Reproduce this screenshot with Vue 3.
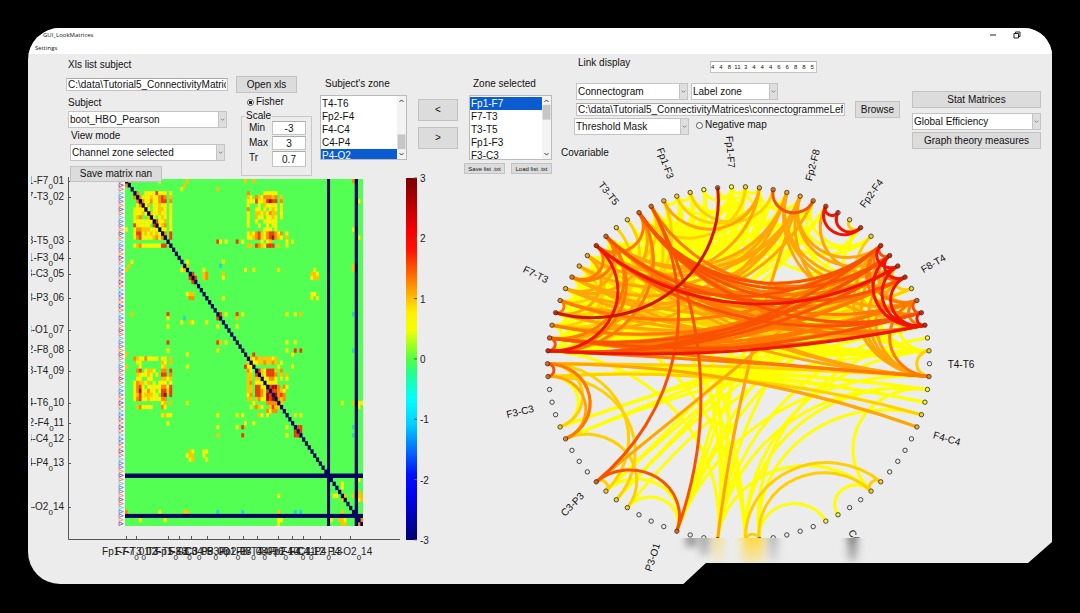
<script setup>
import { ref } from 'vue'

const xlsPath = ref('C:\\data\\Tutorial5_ConnectivityMatrices\\list.xlsx')
const linkPath = ref('C:\\data\\Tutorial5_ConnectivityMatrices\\connectogrammeLeft.txt')
const order = ref('4   4   8  11  3   4   4   4   6   6   8   8   5')
const scaleMin = ref('-3')
const scaleMax = ref('3')
const threshold = ref('0.7')
const subjectZones = ['T4-T6', 'Fp2-F4', 'F4-C4', 'C4-P4', 'P4-O2']
const selectedZones = ['Fp1-F7', 'F7-T3', 'T3-T5', 'Fp1-F3', 'F3-C3']
const subjectZone = ref('P4-O2')
const selectedZone = ref('Fp1-F7')

/* ---- matrix ---- */
const N = 86
const palette = { y: '#fff200', g: '#ffc400', o: '#ff8a00', r: '#f03c00', d: '#a80800', c: '#22d8c8' }
const grid = new Map()
function put(r, c, k) {
  if (!palette[k]) return
  grid.set(r * N + c, k)
  grid.set(c * N + r, k)
}
function block(r0, c0, rows) {
  rows.forEach((line, i) => [...line].forEach((k, j) => {
    if (r0 + i <= c0 + j) put(r0 + i, c0 + j, k)
  }))
}
block(3, 3, [
  '.o..yyyyryyy.y', '.royyygyyoro.g', '..doyyoyyorr.o', '...oyg.yygyy.y', '....oy.yyggy.y',
  '.....ogyygyy.y', '......oy.ygy.y', '.......oryyg.y', '........oygo.y', '.........oyy.y',
  '..........do.r', '...........d.r', '............o.', '.............o'
])
block(3, 44, [
  'o.....yyyyy..', 'gy.ogyooogo.g', 'yyyryygrdrr.o', 'y...y.gyyyy.y', 'o..yy.y.ygy.y',
  'y..ggygyogg.y', 'y..gyy.yygy.y', 'y..y..yyyyy..', 'y...y..y.yy..', '......yyy.y..',
  'ygyorgyorroyo', 'yygorgyordogy', '.....y.yg....', 'gg.rogyrrr.g.'
])
block(44, 44, [
  'ygyogggggyg..', '.gyyggoggog.y', '...........y.', '...drgyrrrg.o', '....rgyrrro.g',
  '.....yyyooy.y', '......yyyyy..', '.......rrddo.o', '........drrogy', '.........rdoro',
  '..........dogo', '............g', '............g'
])
const spots = [
  [2, 33, 'y'], [0, 43, 'g'], [0, 46, 'g'], [1, 21, 'g'], [2, 20, 'y'], [0, 22, 'g'], [0, 1, 'o'], [0, 12, 'y'],
  [0, 82, 'o'], [5, 84, 'y'], [12, 82, 'y'], [14, 84, 'y'], [21, 82, 'g'], [22, 82, 'g'], [15, 33, 'r'], [15, 34, 'y'],
  [15, 36, 'y'], [15, 40, 'r'], [15, 42, 'y'], [13, 58, 'y'], [14, 58, 'g'], [15, 58, 'y'], [16, 58, 'y'], [15, 60, 'y'],
  [20, 35, 'y'], [21, 34, 'c'], [22, 28, 'y'], [23, 28, 'g'], [24, 28, 'g'], [23, 29, 'o'], [24, 29, 'o'], [23, 35, 'g'],
  [24, 35, 'y'], [22, 43, 'y'], [22, 46, 'y'], [22, 55, 'y'], [22, 68, 'y'], [23, 67, 'g'], [23, 68, 'g'], [23, 69, 'y'],
  [24, 67, 'y'], [24, 68, 'g'], [24, 69, 'g'], [28, 67, 'y'], [28, 68, 'y'], [29, 67, 'y'], [29, 69, 'y'], [29, 35, 'y'],
  [33, 40, 'r'], [33, 42, 'y'], [34, 40, 'g'], [36, 40, 'y'], [33, 58, 'y'], [33, 61, 'y'], [33, 63, 'g'], [33, 82, 'c'],
  [33, 36, 'y'], [33, 34, 'r'], [40, 58, 'y'], [40, 61, 'y'], [42, 58, 'y'], [42, 61, 'r'], [42, 63, 'r'], [43, 60, 'y'],
  [42, 82, 'c'], [43, 46, 'r'], [46, 60, 'y'], [48, 58, 'g'], [49, 58, 'y'], [51, 58, 'y'], [55, 78, 'y'], [55, 82, 'g'],
  [55, 85, 'y'], [61, 82, 'c'], [63, 82, 'c'], [61, 62, 'r'], [61, 63, 'r'], [62, 63, 'r'], [58, 61, 'y'], [58, 63, 'y'],
  [24, 25, 'r'], [23, 24, 'r'], [20, 22, 'y'], [21, 22, 'g'], [2, 33, 'g'], [74, 84, 'y'], [76, 78, 'y'], [78, 79, 'g'],
  [75, 78, 'y'], [78, 82, 'g'], [78, 84, 'g'], [79, 85, 'g'], [79, 84, 'y'], [55, 84, 'y'], [56, 84, 'y'], [77, 84, 'g'],
  [82, 12, 'y'], [78, 85, 'g'], [84, 85, 'o']
]
spots.forEach(([r, c, k]) => put(r, c, k))
const cells = [...grid].map(([id, k]) => ({ id, x: id % N, y: Math.floor(id / N), fill: palette[k] }))

const triColors = ['#f08050', '#8a5aa8', '#4f74c8', '#60b8d8', '#e06a50', '#6a3f90']
const triangles = Array.from({ length: N }, (_, i) => ({
  d: `M119 ${179.5 + i * 4.03}v3.4l4.4-1.7z`, stroke: triColors[(i * 5) % 6]
}))

const zoneNames = ['Fp1-F7', 'F7-T3', 'T3-T5', 'Fp1-F3', 'F3-C3', 'C3-P3', 'P3-O1', 'Fp2-F8', 'F8-T4', 'T4-T6', 'Fp2-F4', 'F4-C4', 'C4-P4', 'P4-O2']
const tickY = [181, 197, 241, 258, 274, 298, 330, 350, 371, 403, 423, 439, 463, 507]
const tickX = [126, 136, 168, 179, 191, 207, 229, 243, 257, 278, 292, 303, 320, 350]
const axis = zoneNames.map((name, i) => ({ name, no: String(i + 1).padStart(2, '0'), x: tickX[i], y: tickY[i] }))
const barTicks = [3, 2, 1, 0, -1, -2, -3].map((v, i) => ({ v, y: 178 + i * 60.3 }))

/* ---- connectogram ---- */
const cx = 738.5
const cy = 363.7
const rx = 191
const ry = 177
const angle = i => (i * 2 * Math.PI) / N
const nodes = Array.from({ length: N }, (_, i) => ({ x: cx + rx * Math.cos(angle(i)), y: cy - ry * Math.sin(angle(i)) }))
// Links bend towards the centre and meet the outline at a right angle.
function arc(a, b) {
  const lo = Math.min(a, b)
  const hi = Math.max(a, b)
  const flip = hi - lo > N / 2
  const half = (Math.min(hi - lo, N - hi + lo) * Math.PI) / N
  const t = Math.min(Math.tan(half), 60)
  const p = nodes[lo]
  const q = nodes[hi]
  return `M${p.x.toFixed(1)} ${p.y.toFixed(1)}A${(rx * t).toFixed(1)} ${(ry * t).toFixed(1)} 0 0 ${flip ? 0 : 1} ${q.x.toFixed(1)} ${q.y.toFixed(1)}`
}
function pairs(a0, a1, b0, b1, keep) {
  const out = []
  for (let a = a0; a <= a1; a++) for (let b = b0; b <= b1; b++) if (a < b && keep(a, b)) out.push([a, b])
  return out
}
const layers = [
  { color: '#ffff00', width: 3, links: [
    ...pairs(1, 10, 29, 42, (a, b) => a !== 2 && (a * 5 + b * 3) % 4 !== 0 && b !== 30 && b !== 31),
    ...pairs(32, 42, 33, 42, (a, b) => b - a > 1 && (a + b) % 4 !== 0),
    ...pairs(24, 29, 32, 42, (a, b) => (a * 3 + b) % 2 === 0),
    ...pairs(15, 23, 32, 42, (a, b) => (a * 7 + b * 3) % 4 === 0),
    ...pairs(15, 22, 25, 31, (a, b) => (a * 7 + b * 3) % 7 === 0 && b < 30),
    [25, 26], [26, 27], [21, 22], [20, 21], [22, 24], [11, 16], [17, 8],
    [22, 26], [21, 25], [20, 26], [22, 28], [21, 23], [18, 21], [17, 20], [16, 22], [11, 17], [11, 20], [9, 22], [7, 18], [5, 16], [1, 5], [1, 8], [1, 10], [1, 12],
    [43, 83], [43, 84], [44, 84], [44, 82], [44, 83], [44, 85], [43, 82], [48, 3], [48, 5], [49, 1], [49, 4], [48, 44], [53, 9], [54, 8], [55, 7], [56, 5], [55, 10],
    [54, 60], [53, 60], [56, 60], [60, 7], [60, 10], [60, 17], [63, 30], [63, 27], [63, 22], [63, 3], [63, 10], [65, 33], [65, 29], [65, 1], [65, 84], [66, 2], [66, 82],
    [63, 42], [65, 38], [60, 85], [72, 75], [66, 71], [63, 75], [63, 84], [75, 84], [60, 20], [54, 12]
  ] },
  { color: '#ffd000', width: 3, links: [
    ...pairs(3, 10, 32, 42, (a, b) => (a * 3 + b * 5) % 7 === 0),
    ...pairs(27, 36, 34, 42, (a, b) => b - a > 3 && (a * 3 + b * 2) % 7 === 0),
    [19, 25], [20, 26], [21, 29], [18, 33], [12, 13], [43, 81], [43, 85], [44, 82], [44, 55], [49, 56], [43, 54], [53, 54], [65, 76], [66, 75], [75, 76], [65, 66], [43, 48], [6, 8], [3, 11], [85, 7], [85, 10], [1, 85]
  ] },
  { color: '#ffa50a', width: 3, links: [
    [17, 33], [17, 36], [17, 38], [18, 35], [18, 40], [18, 7], [18, 5], [17, 9], [17, 4], [17, 10], [15, 8], [16, 37], [20, 27], [20, 34], [29, 37], [29, 41],
    [33, 85], [32, 85], [36, 85], [38, 5], [37, 3], [5, 9], [63, 17], [53, 10], [43, 81], [43, 49], [44, 49], [34, 39], [32, 37], [10, 85], [9, 85], [8, 85], [7, 85],
    [36, 8], [39, 7], [40, 9], [18, 32], [17, 32], [18, 8]
  ] },
  { color: '#ff7800', width: 3, links: [
    [42, 85], [41, 85], [33, 3], [32, 3], [32, 4], [10, 41], [10, 38], [9, 40], [7, 42], [5, 42], [4, 41], [29, 8], [29, 5], [29, 3], [32, 36], [33, 36],
    [32, 41], [29, 42], [29, 33], [32, 42], [85, 5], [4, 10], [5, 10], [7, 10], [3, 5], [38, 39], [43, 49], [33, 7], [32, 9], [41, 8], [41, 5], [41, 7], [28, 9], [10, 32]
  ] },
  { color: '#f85200', width: 3, links: [
    [16, 19], [28, 53], [28, 60], [53, 60], [29, 9], [29, 10], [29, 7], [33, 10], [10, 42], [41, 9], [8, 42], [9, 42], [4, 42], [41, 3], [41, 42], [43, 44], [33, 4], [8, 32], [9, 10], [5, 4], [29, 4]
  ] },
  { color: '#ee1400', width: 3, links: [
    [33, 8], [33, 42], [42, 3], [9, 3], [8, 3], [7, 3], [9, 7], [10, 8], [3, 4], [14, 15], [12, 15], [12, 14]
  ] },
  { color: '#cc1400', width: 3, links: [[23, 39]] }
]
const zoneLabels = [
  { t: 'Fp1-F7', x: 731, y: 152, r: 86 }, { t: 'Fp1-F3', x: 666, y: 163, r: 70 }, { t: 'T3-T5', x: 609, y: 193, r: 52 },
  { t: 'F7-T3', x: 536, y: 274, r: 26 }, { t: 'F3-C3', x: 520, y: 411, r: -13 }, { t: 'C3-P3', x: 572, y: 504, r: -46 },
  { t: 'P3-O1', x: 652, y: 557, r: -72 }, { t: 'Fp2-F8', x: 812, y: 165, r: -75 }, { t: 'Fp2-F4', x: 871, y: 193, r: -54 },
  { t: 'F8-T4', x: 933, y: 263, r: -30 }, { t: 'T4-T6', x: 961, y: 364, r: 0 }, { t: 'F4-C4', x: 947, y: 438, r: 16 },
  { t: 'C4-P4', x: 859, y: 542, r: 56 }
]
</script>

<template>
  <div class="desk">
    <div class="window">
      <div class="face">
        <header>
          <div class="titlebar">
            <span class="title">GUI_LookMatrices</span>
            <div class="winbtns">
              <button aria-label="Minimize"><svg viewBox="0 0 8 8"><path d="M1 4h6" /></svg></button>
              <button aria-label="Restore"><svg viewBox="0 0 8 8"><path d="M1 2.5h4.500v4.500h-4.500zM2.500 2.500v-1.500h4.500v4.500h-1.500" /></svg></button>
            </div>
          </div>
          <nav><button class="menu">Settings</button></nav>
        </header>

        <main>
          <section class="panel">
            <div class="controls left">
              <div class="col files">
                <label for="xls" class="lab first">Xls list subject</label>
                <input id="xls" v-model="xlsPath" class="field path" type="text" />
                <label for="subject" class="lab subject">Subject</label>
                <span class="drop"><select id="subject"><option>boot_HBO_Pearson</option></select><svg viewBox="0 0 8 8"><path d="M2 3l2 2 2-2" /></svg></span>
                <label for="view" class="lab inset">View mode</label>
                <span class="drop view"><select id="view"><option>Channel zone selected</option></select><svg viewBox="0 0 8 8"><path d="M2 3l2 2 2-2" /></svg></span>
                <button class="btn save">Save matrix nan</button>
              </div>

              <div class="col scale">
                <button class="btn open">Open xls</button>
                <label class="radio fisher"><input type="radio" name="fisher" checked />Fisher</label>
                <fieldset>
                  <legend>Scale</legend>
                  <label for="min">Min</label><input id="min" v-model="scaleMin" class="field" type="text" />
                  <label for="max">Max</label><input id="max" v-model="scaleMax" class="field" type="text" />
                  <label for="tr">Tr</label><input id="tr" v-model="threshold" class="field tall" type="text" />
                </fieldset>
              </div>

              <div class="col zone">
                <span id="zone-a" class="lab">Subject's zone</span>
                <div class="listbox">
                  <ul role="listbox" aria-labelledby="zone-a">
                    <li v-for="z in subjectZones" :key="z" role="option" :aria-selected="z === subjectZone" @click="subjectZone = z">{{ z }}</li>
                  </ul>
                  <svg class="bar" viewBox="0 0 8 64"><rect y="39" width="8" height="15" /><path d="M2 6l2-2 2 2M2 58l2 2 2-2" /></svg>
                </div>
              </div>

              <div class="col move">
                <button class="btn">&lt;</button>
                <button class="btn">&gt;</button>
              </div>

              <div class="col zone picked">
                <span id="zone-b" class="lab">Zone selected</span>
                <div class="listbox">
                  <ul role="listbox" aria-labelledby="zone-b">
                    <li v-for="z in selectedZones" :key="z" role="option" :aria-selected="z === selectedZone" @click="selectedZone = z">{{ z }}</li>
                  </ul>
                  <svg class="bar" viewBox="0 0 8 64"><rect y="9" width="8" height="15" /><path d="M2 6l2-2 2 2M2 58l2 2 2-2" /></svg>
                </div>
                <div class="lists">
                  <button class="btn tiny">Save list .txt</button>
                  <button class="btn tiny">Load list .txt</button>
                </div>
              </div>
            </div>

            <svg class="plot matrix" viewBox="28 176 529 408" role="img" aria-label="Connectivity matrix">
              <defs>
                <linearGradient id="jet" x1="0" y1="0" x2="0" y2="1">
                  <stop offset="0" stop-color="#780000" /><stop offset=".14" stop-color="#f40000" /><stop offset=".2" stop-color="#ff1400" />
                  <stop offset=".37" stop-color="#fff000" /><stop offset=".42" stop-color="#f4ff00" /><stop offset=".5" stop-color="#54ff40" />
                  <stop offset=".54" stop-color="#20ff90" /><stop offset=".61" stop-color="#00ffff" /><stop offset=".68" stop-color="#00d0ff" />
                  <stop offset=".82" stop-color="#0010ff" /><stop offset=".88" stop-color="#0000f0" /><stop offset="1" stop-color="#000070" />
                </linearGradient>
                <clipPath id="edge"><rect x="31" y="170" width="530" height="420" /></clipPath>
              </defs>
              <g clip-path="url(#edge)">
                <path class="axis" d="M68.500 177V539.500H400" />
                <g v-for="a in axis" :key="a.no">
                  <path class="axis" :d="`M68 ${a.y + 0.5}h3M${a.x + 0.5} 539v-3`" />
                  <text :x="64" :y="a.y + 3" text-anchor="end">{{ a.name }}<tspan class="sub" dy="5">0</tspan><tspan dy="-5">{{ a.no }}</tspan></text>
                  <text :x="a.x" y="555" text-anchor="middle">{{ a.name }}<tspan class="sub" dy="5">0</tspan><tspan dy="-5">{{ a.no }}</tspan></text>
                </g>
              </g>
              <rect x="118" y="179" width="7" height="347" fill="#f6f6f8" />
              <path v-for="(t, i) in triangles" :key="i" class="tri" :d="t.d" :stroke="t.stroke" />
              <svg x="125" y="179" width="238" height="347" viewBox="0 0 86 86" preserveAspectRatio="none">
                <rect width="86" height="86" fill="#54ff54" />
                <rect v-for="c in cells" :key="c.id" :x="c.x" :y="c.y" width="1.05" height="1.05" :fill="c.fill" />
                <g fill="#04085c">
                  <rect v-for="i in N" :key="i" :x="i - 1" :y="i - 1" width="1.15" height="1.1" />
                  <rect x="73" width="1.1" height="86" /><rect x="83" width="1.2" height="86" />
                  <rect y="73" width="86" height="1.1" /><rect y="83" width="86" height="1" />
                </g>
              </svg>
              <rect x="406" y="178" width="11" height="362" fill="url(#jet)" />
              <g v-for="b in barTicks" :key="b.v">
                <path class="axis" :d="`M414 ${b.y}h3`" />
                <text x="420" :y="b.y + 4">{{ b.v }}</text>
              </g>
            </svg>
          </section>

          <section class="panel">
            <div class="controls right">
              <div class="col links">
                <div class="row head">
                  <label for="order" class="lab">Link display</label>
                  <input id="order" v-model="order" class="field order" type="text" />
                </div>
                <div class="row">
                  <span class="drop kind"><select aria-label="Link display"><option>Connectogram</option></select><svg viewBox="0 0 8 8"><path d="M2 3l2 2 2-2" /></svg></span>
                  <span class="drop label"><select aria-label="Label"><option>Label zone</option></select><svg viewBox="0 0 8 8"><path d="M2 3l2 2 2-2" /></svg></span>
                </div>
                <input v-model="linkPath" class="field path" type="text" aria-label="Link file" />
                <div class="row mask">
                  <span class="drop"><select aria-label="Mask"><option>Threshold Mask</option></select><svg viewBox="0 0 8 8"><path d="M2 3l2 2 2-2" /></svg></span>
                  <label class="radio"><input type="radio" name="negative" />Negative map</label>
                </div>
                <span class="lab cov">Covariable</span>
              </div>
              <button class="btn browse">Browse</button>
              <div class="col stats">
                <button class="btn">Stat Matrices</button>
                <span class="drop"><select aria-label="Graph measure"><option>Global Efficiency</option></select><svg viewBox="0 0 8 8"><path d="M2 3l2 2 2-2" /></svg></span>
                <button class="btn graph">Graph theory measures</button>
              </div>
            </div>

            <svg class="plot circle" viewBox="557 160 495 424" role="img" aria-label="Connectogram">
              <defs>
                <clipPath id="shown"><path d="M480 100H1060V538H686V600H480z" /></clipPath>
                <filter id="soft" x="-100%" y="-50%" width="300%" height="200%"><feGaussianBlur stdDeviation="4 3" /></filter>
                <linearGradient id="fade" x1="0" y1="0" x2="0" y2="1"><stop offset="0" stop-color="#fff" /><stop offset="1" stop-color="#fff" stop-opacity=".25" /></linearGradient>
                <mask id="fall"><rect x="660" y="538" width="400" height="26" fill="url(#fade)" /></mask>
              </defs>
              <g mask="url(#fall)">
                <g filter="url(#soft)">
                  <rect x="687" y="534" width="8" height="14" fill="#777" />
                  <rect x="700" y="534" width="9" height="22" fill="#999" />
                  <rect x="714" y="530" width="8" height="34" fill="#f6dc80" />
                  <rect x="742" y="530" width="22" height="36" fill="#ffd83c" />
                  <rect x="769" y="534" width="8" height="28" fill="#aaa" />
                  <rect x="849" y="532" width="7" height="30" fill="#555" />
                </g>
              </g>
              <g clip-path="url(#shown)">
                <g v-for="(l, i) in layers" :key="i" class="link" :stroke="l.color" :stroke-width="l.width">
                  <path v-for="(p, j) in l.links" :key="j" :d="arc(p[0], p[1])" />
                </g>
                <circle v-for="(n, i) in nodes" :key="i" class="node" :cx="n.x" :cy="n.y" r="2.200" />
                <text v-for="z in zoneLabels" :key="z.t" text-anchor="middle" dy="4" :transform="`translate(${z.x} ${z.y}) rotate(${z.r})`">{{ z.t }}</text>
              </g>
            </svg>
          </section>
        </main>
      </div>
    </div>
  </div>
</template>

<style>
html, body { background: #000; }
</style>

<style scoped>
* { box-sizing: border-box; }
.desk { min-height: 100vh; padding: 28px 28px 29px; background: #000; font-family: "Liberation Sans", Arial, sans-serif; font-size: 10px; line-height: 12px; color: #111; }
.window { border-radius: 32px 28px 28px 32px; overflow: hidden; }
.face {
  background: #ececec;
  clip-path: polygon(0 0, 100% 0, 100% calc(100% - 42px), calc(100% - 24px) calc(100% - 21px), 66.200% calc(100% - 21px), 64% 100%, 0 100%);
}
header { height: 26px; background: #fff; font-family: "Open Sans", "Noto Sans", sans-serif; font-size: 6px; }
.titlebar { display: flex; justify-content: space-between; height: 14px; padding: 0 30px 0 15px; align-items: center; }
.winbtns { display: flex; gap: 15px; }
.winbtns button { width: 9px; height: 9px; padding: 0; border: 0; background: none; display: flex; }
.winbtns svg { width: 8px; height: 8px; fill: none; stroke: #222; stroke-width: 1; }
nav { display: flex; padding-left: 7px; }
.menu { border: 0; background: none; padding: 0; font: inherit; line-height: 12px; color: #111; }
main { display: grid; grid-template-columns: minmax(0, 529fr) minmax(0, 495fr); }
.panel { display: flex; flex-direction: column; min-width: 0; }
.controls { display: flex; align-items: flex-start; position: relative; z-index: 1; }
.col { display: flex; flex-direction: column; min-width: 0; }
.row { display: flex; }

input, select, button { font-family: inherit; color: inherit; }
.field { border: 1px solid #c4c4c4; border-top-color: #aaa; background: #fff; padding: 0 1px; font-size: 10px; line-height: 12px; min-width: 0; outline: 0; }
.path { height: 13px; }
.btn { border: 1px solid #c2c2c2; background: #dcdcdc; padding: 0; font-size: 10px; line-height: 12px; height: 17px; white-space: nowrap; }
.drop { position: relative; display: block; height: 17px; }
.drop select { appearance: none; width: 100%; height: 17px; border: 1px solid #c4c4c4; border-radius: 0; background: #fff; padding: 0 10px 0 1px; font-size: 10px; line-height: 12px; }
.drop svg { position: absolute; right: 0; top: 0; width: 9px; height: 17px; background: #dedede; border: 1px solid #c4c4c4; fill: none; stroke: #777; pointer-events: none; }
.radio { display: flex; align-items: center; gap: 2px; white-space: nowrap; }
.radio input { appearance: none; width: 7px; height: 7px; margin: 0; border: 1px solid #555; border-radius: 50%; background: #fff; }
.radio input:checked { background: radial-gradient(#222 0 45%, #fff 55%); }

.left { padding-left: 38px; height: 126px; }
.files { flex: 0 1 162px; }
.files .first { margin: 5px 0 7px 2px; }
.files .subject { margin: 6px 0 2px 2px; }
.files .drop { margin: 0 1px 0 2px; }
.files .inset { margin: 2px 0 2px 5px; }
.files .view { margin: 0 3px 0 4px; }
.save { width: 92px; height: 16px; margin: 5px 0 0 4px; }
.scale { flex: 0 1 76px; margin: 22px 0 0 8px; }
.open { width: 61px; }
.fisher { margin: 3px 0 3px 11px; }
fieldset { display: grid; grid-template-columns: 23px 34px; row-gap: 1px; margin: 0 0 0 5px; border: 1px solid #c8c8c8; padding: 0 4px 8px 7px; width: 71px; min-width: 0; }
legend { padding: 0 1px; margin-left: -4px; line-height: 10px; }
fieldset .field { height: 14px; text-align: center; }
fieldset .tall { height: 16px; }
fieldset label { line-height: 13px; }
.zone { flex: 0 1 87px; margin: 24px 0 0 8px; }
.zone .lab { margin: 0 0 5px 5px; }
.listbox { display: flex; height: 65px; border: 1px solid #bbb; background: #fff; overflow: hidden; }
.listbox ul { flex: 1; list-style: none; margin: 0; padding: 1px 0 0; }
.listbox li { height: 13px; line-height: 13px; padding-left: 1px; }
.listbox li[aria-selected="true"] { background: #0a5cd0; color: #fff; }
.bar { width: 9px; height: 63px; background: #f3f3f3; fill: #c6c6c6; }
.bar path { fill: none; stroke: #333; }
.move { flex: 0 1 40px; margin: 45px 0 0 11px; gap: 6px; }
.move .btn { height: 22px; }
.picked { flex: 0 1 88px; margin-left: 6px; }
.picked .lab { margin-left: 9px; }
.picked .listbox { margin-left: 5px; }
.lists { display: flex; justify-content: space-between; margin-top: 3px; }
.tiny { font-size: 6px; line-height: 8px; height: 11px; width: 41px; }

.right { padding-left: 17px; height: 106px; }
.links { flex: 0 1 271px; }
.head { margin: 3px 0 9px 4px; height: 17px; }
.head .lab { width: 132px; }
.order { width: 107px; height: 12px; font-size: 6px; line-height: 8px; margin-top: 4px; padding: 0; }
.kind { width: 112px; margin: 0 3px 0 2px; }
.label { width: 87px; }
.links .path { margin: 3px 0 2px 2px; }
.mask .drop { width: 115px; }
.mask .radio { margin: -3px 0 0 7px; }
.cov { margin: 12px 0 0 -13px; }
.browse { flex: 0 1 45px; margin: 47px 0 0 10px; }
.stats { flex: 0 1 129px; margin: 37px 0 0 12px; }
.stats .drop { margin: 5px 0 2px; }

.plot { display: block; width: 100%; height: auto; overflow: visible; pointer-events: none; }
.plot text { font-size: 10px; fill: #222; }
.matrix { margin-top: -4px; }
.plot .sub { font-size: 8px; }
.axis { fill: none; stroke: #555; stroke-width: 1; }
.tri { fill: #fff; stroke-width: .8; }
.link { fill: none; stroke-linecap: round; }
.node { fill: none; stroke: #333; stroke-width: .9; }
.circle text { fill: #111; }
</style>
